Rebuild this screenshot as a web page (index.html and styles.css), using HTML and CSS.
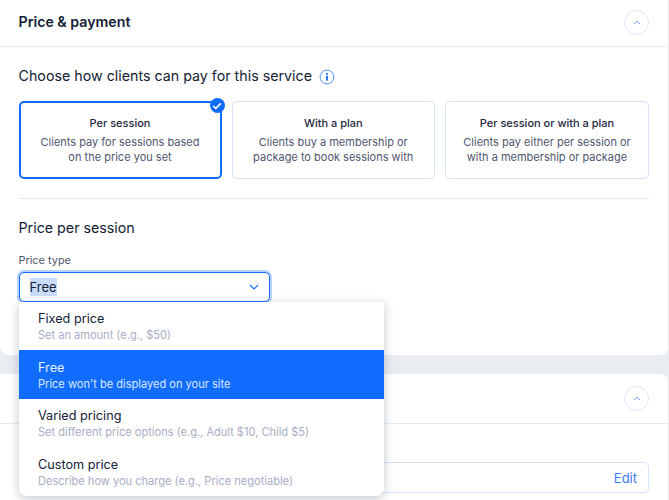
FILE: index.html
```html
<!DOCTYPE html>
<html lang="en">
<head>
<meta charset="utf-8">
<title>Price &amp; payment</title>
<link rel="stylesheet" href="styles.css">
</head>
<body>
<main class="page">
  <section class="card card-first">
    <header class="card-header">
      <h2 class="card-title">Price &amp; payment</h2>
      <button class="collapse" type="button" aria-label="Collapse">
        <svg width="8" height="5" viewBox="0 0 8 5"><path d="M1 4 4 1.2 7 4" fill="none" stroke="#7fa6fb" stroke-width="1"/></svg>
      </button>
    </header>
    <div class="card-body">
      <div class="question">
        <h3 class="subtitle">Choose how clients can pay for this service</h3>
        <svg class="info" width="16" height="16" viewBox="0 0 16 16"><circle cx="8" cy="8" r="6.9" fill="none" stroke="#4f93ff" stroke-width="1"/><rect x="7.1" y="6.8" width="1.8" height="4.8" fill="#116dff"/><rect x="7.1" y="4.1" width="1.8" height="1.7" fill="#116dff"/></svg>
      </div>
      <div class="options">
        <div class="option option-selected">
          <span class="option-name">Per session</span>
          <span class="option-desc">Clients pay for sessions based on the price you set</span>
          <span class="badge">
            <svg width="10" height="8" viewBox="0 0 10 8"><path d="M1.2 4 3.8 6.4 8.8 1.4" fill="none" stroke="#fff" stroke-width="1.5"/></svg>
          </span>
        </div>
        <div class="option">
          <span class="option-name">With a plan</span>
          <span class="option-desc">Clients buy a membership or package to book sessions with</span>
        </div>
        <div class="option">
          <span class="option-name">Per session or with a plan</span>
          <span class="option-desc">Clients pay either per session or with a membership or package</span>
        </div>
      </div>
      <hr class="divider">
      <h3 class="subtitle subtitle-price">Price per session</h3>
      <label class="field-label">Price type</label>
      <div class="select-wrap">
        <div class="select">
          <span class="select-value">Free</span>
          <svg width="10" height="6" viewBox="0 0 10 6"><path d="M1 1 5 5 9 1" fill="none" stroke="#116dff" stroke-width="1.1"/></svg>
        </div>
        <ul class="menu">
          <li class="menu-item"><span class="menu-name">Fixed price</span><span class="menu-desc">Set an amount (e.g., $50)</span></li>
          <li class="menu-item menu-item-active"><span class="menu-name">Free</span><span class="menu-desc">Price won't be displayed on your site</span></li>
          <li class="menu-item"><span class="menu-name">Varied pricing</span><span class="menu-desc">Set different price options (e.g., Adult $10, Child $5)</span></li>
          <li class="menu-item"><span class="menu-name">Custom price</span><span class="menu-desc">Describe how you charge (e.g., Price negotiable)</span></li>
        </ul>
      </div>
    </div>
  </section>
  <section class="card card-second">
    <header class="card-header">
      <span class="card-title"></span>
      <button class="collapse" type="button" aria-label="Collapse">
        <svg width="8" height="5" viewBox="0 0 8 5"><path d="M1 4 4 1.2 7 4" fill="none" stroke="#7fa6fb" stroke-width="1"/></svg>
      </button>
    </header>
    <div class="card-body-second">
      <div class="edit-field"><span class="edit-link">Edit</span></div>
    </div>
  </section>
</main>
</body>
</html>
```
FILE: styles.css
```css
* { box-sizing: border-box; }
html, body { margin: 0; height: 100%; }
body {
  background: #e9edf2;
  font-family: Inter, "Liberation Sans", sans-serif;
  color: #162d3d;
  overflow: hidden;
}
.page {
  display: flex;
  flex-direction: column;
  gap: 19px;
  width: 668px;
}
.card {
  background: #fff;
  border-radius: 0 0 8px 8px;
}
.card-first { height: 355px; }
.card-second { border-radius: 0 8px 0 0; height: 126px; }
.card-header {
  height: 47px;
  display: flex;
  align-items: center;
  justify-content: space-between;
  padding: 0 19px 2px 18.5px;
  border-bottom: 1px solid #e6ebf3;
}
.card-second .card-header { height: 50px; padding-bottom: 1px; }
.card-title {
  margin: 0 0 1px;
  font-size: 14.2px;
  font-weight: 600;
  color: #131d36;
}
.collapse {
  width: 25px;
  height: 25px;
  padding: 0;
  display: flex;
  align-items: center;
  justify-content: center;
  background: #fff;
  border: 1px solid #dce7fd;
  border-radius: 50%;
}
.card-body { padding: 19px 19px 0 18.5px; }
.question {
  display: flex;
  align-items: center;
  gap: 7px;
  height: 20px;
}
.subtitle {
  margin: 0;
  font-size: 14.25px;
  font-weight: 400;
  line-height: 20px;
  color: #131d36;
}
.info { margin-top: 1px; }
.options {
  display: grid;
  grid-template-columns: 203px 203.5px 204px;
  gap: 10px;
  margin-top: 15px;
  height: 78px;
}
.option {
  position: relative;
  display: flex;
  flex-direction: column;
  align-items: center;
  padding: 14px 12px 0;
  border: 1px solid #d6e2f8;
  border-radius: 5px;
  text-align: center;
}
.option-selected {
  border: 2px solid #116dff;
  padding-top: 13px;
}
.option-name {
  font-size: 11px;
  font-weight: 500;
  line-height: 15px;
  color: #1e2740;
}
.option-desc {
  margin-top: 4px;
  font-size: 11px;
  line-height: 15px;
  color: #50566f;
}
.badge {
  position: absolute;
  top: -5px;
  right: -5px;
  width: 15px;
  height: 15px;
  border-radius: 50%;
  background: #116dff;
  display: flex;
  align-items: center;
  justify-content: center;
}
.divider {
  margin: 19px 0 0;
  border: 0;
  border-top: 1px solid #e6ebf3;
}
.subtitle-price { margin-top: 19px; }
.field-label {
  display: block;
  margin-top: 15px;
  font-size: 10.9px;
  line-height: 15px;
  color: #50566f;
}
.select-wrap {
  position: relative;
  width: 251px;
  margin-top: 4px;
}
.select {
  height: 30px;
  display: flex;
  align-items: center;
  justify-content: space-between;
  padding: 0 10px;
  border: 1.5px solid #116dff;
  border-radius: 5px;
  box-shadow: 0 0 0 2px #b9d2fc;
  background: #fff;
}
.select-value {
  font-size: 13px;
  line-height: 18px;
  background: #c9dcfb;
  color: #131d36;
}
.menu {
  position: absolute;
  top: 29.5px;
  left: 0;
  z-index: 5;
  width: 365.5px;
  margin: 0;
  padding: 0;
  list-style: none;
  background: #fff;
  border-radius: 0 0 8px 8px;
  box-shadow: 0 4px 12px rgba(22, 45, 61, .18), 0 0 10px rgba(22, 45, 61, .08);
}
.menu-item {
  height: 48.5px;
  display: flex;
  flex-direction: column;
  justify-content: center;
  padding: 2px 19.5px 0;
}
.menu-name {
  font-size: 12.7px;
  line-height: 18px;
  color: #131d36;
}
.menu-desc {
  font-size: 11.05px;
  line-height: 15px;
  color: #a8aec4;
}
.menu-item-active { background: #116dff; }
.menu-item-active .menu-name { color: #e8f0ff; }
.menu-item-active .menu-desc { color: #dbe7ff; }
.card-body-second {
  padding: 38px 19px 0;
}
.edit-field {
  height: 31px;
  display: flex;
  align-items: center;
  justify-content: flex-end;
  padding: 0 11px;
  border: 1.5px solid #d6e4fb;
  border-radius: 5px;
}
.edit-link {
  font-size: 13px;
  color: #3a80f8;
}
```
